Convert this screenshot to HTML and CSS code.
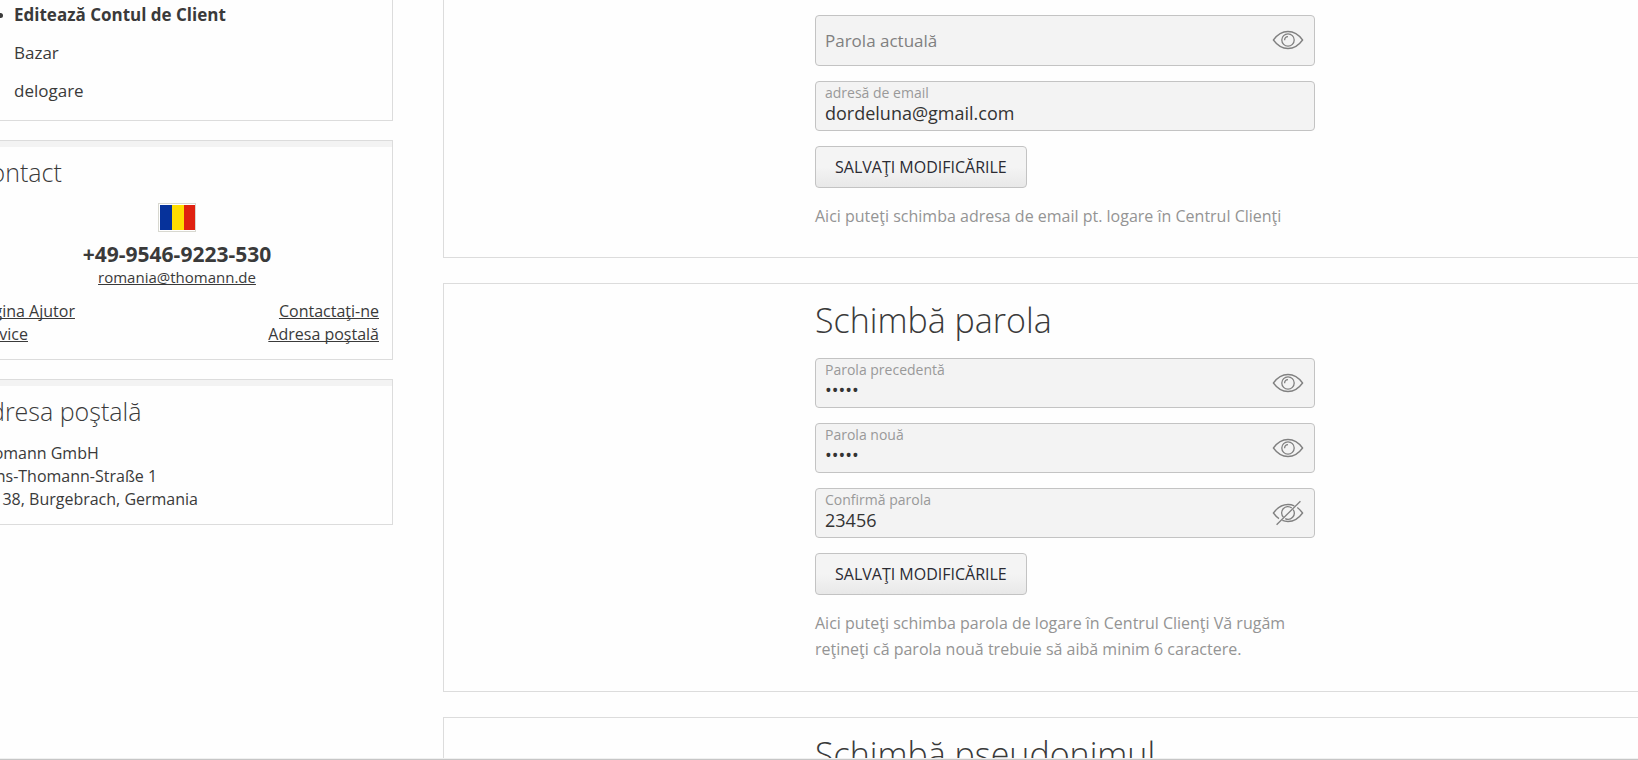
FILE: index.html
```html
<!DOCTYPE html>
<html lang="ro">
<head>
<meta charset="utf-8">
<title>Editează Contul de Client</title>
<link rel="stylesheet" href="styles.css">
</head>
<body>
<svg class="sprite" aria-hidden="true">
  <symbol id="eye" viewBox="0 0 32 26">
    <path d="M1.4 13C5 8 9.800 4.500 16 4.500S27 8 30.600 13C27 18 22.200 21.500 16 21.500S5 18 1.400 13Z"/>
    <circle cx="16" cy="13" r="6.200"/>
    <path d="M12.600 13.200C12.600 10.900 14 9.700 16 9.600"/>
  </symbol>
  <symbol id="eye-off" viewBox="0 0 32 26">
    <path d="M7 18.600C4.800 17.100 3 15.200 1.400 13C5 8 9.800 4.500 16 4.500C18.300 4.500 20.400 5 22.300 5.800M25.300 7.500C27.300 9 29 10.800 30.600 13C27 18 22.200 21.500 16 21.500C13.900 21.500 12 21.100 10.300 20.400"/>
    <path d="M11.500 17.300A6.200 6.200 0 0 1 19.800 8.100M21.200 9.700A6.200 6.200 0 0 1 13.200 18.600"/>
    <path d="M4.600 24.800L28.400 1.200"/>
  </symbol>
</svg>
<div class="page">
  <aside class="sidebar">
    <nav class="card menu">
      <ul class="menu-list">
        <li class="current"><a href="#">Editează Contul de Client</a></li>
        <li><a href="#">Bazar</a></li>
        <li><a href="#">delogare</a></li>
      </ul>
    </nav>
    <section class="card panel">
      <h3 class="panel-title">Contact</h3>
      <div class="hotline">
        <svg class="flag" viewBox="0 0 35 26" preserveAspectRatio="none" role="img" aria-label="România">
          <rect width="12" height="26" fill="#06329b"/>
          <rect x="12" width="12" height="26" fill="#fd0"/>
          <rect x="24" width="11" height="26" fill="#df2110"/>
        </svg>
        <strong class="phone">+49-9546-9223-530</strong>
        <a class="mail" href="#">romania@thomann.de</a>
      </div>
      <div class="links">
        <div class="links-col"><a href="#">Pagina Ajutor</a><a href="#">Service</a></div>
        <div class="links-col links-end"><a href="#">Contactaţi-ne</a><a href="#">Adresa poştală</a></div>
      </div>
    </section>
    <section class="card panel">
      <h3 class="panel-title">Adresa poştală</h3>
      <address class="address">Thomann GmbH<br>Hans-Thomann-Straße 1<br>96138, Burgebrach, Germania</address>
    </section>
  </aside>
  <main class="content">
    <section class="card block block-first">
      <form class="form">
        <div class="field">
          <input class="input input-empty" type="password" placeholder="Parola actuală" aria-label="Parola actuală">
          <button class="toggle" type="button" aria-label="Arată parola"><svg class="icon"><use href="#eye"/></svg></button>
        </div>
        <div class="field">
          <label class="label" for="email">adresă de email</label>
          <input class="input labelled" id="email" type="email" value="dordeluna@gmail.com">
        </div>
        <button class="submit" type="button">SALVAŢI MODIFICĂRILE</button>
        <p class="hint">Aici puteţi schimba adresa de email pt. logare în Centrul Clienţi</p>
      </form>
    </section>
    <section class="card block">
      <form class="form">
        <h2 class="title">Schimbă parola</h2>
        <div class="field">
          <label class="label" for="old">Parola precedentă</label>
          <input class="input labelled" id="old" type="password" value="12345">
          <button class="toggle" type="button" aria-label="Arată parola"><svg class="icon"><use href="#eye"/></svg></button>
        </div>
        <div class="field">
          <label class="label" for="new">Parola nouă</label>
          <input class="input labelled" id="new" type="password" value="12345">
          <button class="toggle" type="button" aria-label="Arată parola"><svg class="icon"><use href="#eye"/></svg></button>
        </div>
        <div class="field">
          <label class="label" for="confirm">Confirmă parola</label>
          <input class="input labelled" id="confirm" type="text" value="23456">
          <button class="toggle" type="button" aria-label="Ascunde parola"><svg class="icon"><use href="#eye-off"/></svg></button>
        </div>
        <button class="submit" type="button">SALVAŢI MODIFICĂRILE</button>
        <p class="hint">Aici puteţi schimba parola de logare în Centrul Clienţi Vă rugăm reţineţi că parola nouă trebuie să aibă minim 6 caractere.</p>
      </form>
    </section>
    <section class="card block">
      <form class="form">
        <h2 class="title">Schimbă pseudonimul</h2>
      </form>
    </section>
  </main>
</div>
<div class="bottom-bar"></div>
</body>
</html>
```
FILE: styles.css
```css
* { box-sizing: border-box; }
html { overflow: hidden; }
body {
  margin: 0;
  height: 100vh;
  overflow: hidden;
  background: #fefefe;
  color: #3a3a3a;
  font: 16px/23px "Open Sans", "Noto Sans", sans-serif;
  /* Keeps the cedilla forms of ţ and ş */
  font-feature-settings: "locl" 0;
}
h2, h3, p, ul { margin: 0; padding: 0; }
a { color: inherit; text-decoration-skip-ink: none; }
.sprite { display: none; }

/* The page is wider than the window on both sides. */
.page {
  display: flex;
  gap: 50px;
  align-items: flex-start;
  height: 100vh;
  overflow: hidden;
  margin: 0 -49px 0 -39px;
}
.card { border: 1px solid #dcdcdc; }

.sidebar {
  flex: 0 0 432px;
  display: flex;
  flex-direction: column;
  gap: 19px;
}
.menu { border-top: 0; padding: 0 13px 10px 36px; }
.menu-list { font-size: 17px; line-height: 38px; margin-top: -4px; }
.menu-list li {
  display: flex;
  align-items: center;
  padding-left: 16px;
}
.menu-list .current { gap: 11px; padding-left: 0; font-weight: 700; }
.menu-list .current::before {
  content: "";
  width: 5px;
  height: 5px;
  border-radius: 50%;
  background: currentColor;
}
.menu-list a { text-decoration: none; }

.panel { border-top: 1px solid #dcdcdc; padding: 0 13px 13px; }
.panel::before {
  content: "";
  display: block;
  height: 6px;
  margin: 0 -13px;
  background: #f3f3f3;
}
.panel-title {
  padding: 7px 0 13px;
  font-size: 25px;
  font-weight: 300;
  line-height: 36px;
}
.hotline {
  display: flex;
  flex-direction: column;
  align-items: center;
}
.flag {
  width: 38px;
  height: 29px;
  padding: 1px 0 1px 1px;
  border: 1px solid #d8d8d0;
  background: #fff;
}
.phone { margin-top: 8px; font-size: 21px; line-height: 28px; }
.mail { font-size: 15px; line-height: 18px; }
.links {
  display: flex;
  justify-content: space-between;
  margin-top: 14px;
}
.links-col { display: flex; flex-direction: column; align-items: flex-start; }
.links-end { align-items: flex-end; }
.address { font-style: normal; }

.content {
  flex: 1;
  min-width: 0;
  display: flex;
  flex-direction: column;
  gap: 25px;
}
.block { padding: 14px 20px 29px; }
.block-first { border-top: 0; padding: 15px 20px 28px; }
.form {
  display: flex;
  flex-direction: column;
  align-items: flex-start;
  gap: 15px;
  width: 100%;
  max-width: 500px;
  margin: 0 auto;
}
.title { font-size: 34px; font-weight: 300; line-height: 45px; }
.field { position: relative; width: 100%; }
.input {
  display: block;
  width: 100%;
  height: 50px;
  padding: 0 50px 0 9px;
  border: 1px solid #c3c3c3;
  border-radius: 4px;
  background: #f3f3f3;
  color: #333;
  font: inherit;
  font-size: 18px;
  outline: 0;
}
.input-empty { height: 51px; font-size: 17px; }
.input::placeholder { color: #808080; opacity: 1; }
.labelled { padding-top: 14px; }
.label {
  position: absolute;
  top: 2px;
  left: 10px;
  color: #999;
  font-size: 14px;
  line-height: 20px;
}
.toggle {
  position: absolute;
  top: 12px;
  right: 11px;
  display: flex;
  padding: 0;
  border: 0;
  background: none;
  color: #808080;
}
.icon {
  width: 32px;
  height: 26px;
  fill: none;
  stroke: currentColor;
  stroke-width: 1.3;
}
.submit {
  height: 42px;
  padding: 0 19px;
  border: 1px solid #c3c3c3;
  border-radius: 4px;
  background: linear-gradient(#f4f4f4 50%, #e8e8e8);
  color: #2b2b33;
  font: inherit;
}
.hint { color: #949494; line-height: 26px; }

.bottom-bar {
  position: fixed;
  inset: auto 0 0;
  height: 2px;
  border-bottom: 1px solid #c6c6c6;
  background: #f0f0f0;
}
```
